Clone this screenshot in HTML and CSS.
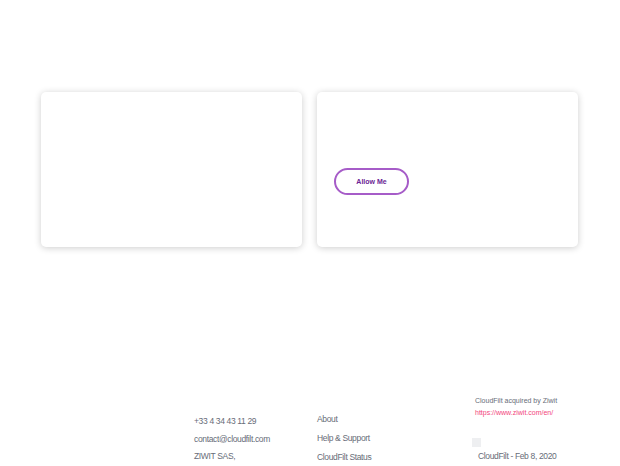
FILE: index.html
```html
<!DOCTYPE html>
<html lang="en">
<head>
<meta charset="utf-8">
<title>CloudFilt</title>
<link rel="stylesheet" href="styles.css">
</head>
<body>
<main class="cards">
  <section class="card"></section>
  <section class="card card-action">
    <button class="allow-btn" type="button">Allow Me</button>
  </section>
</main>
<footer class="footer">
  <div class="col col-contact">
    <p class="line-contact">+33 4 34 43 11 29</p>
    <p class="line-contact">contact@cloudfilt.com</p>
    <p class="line-contact">ZIWIT SAS,</p>
  </div>
  <div class="col col-links">
    <a class="line-link" href="#">About</a>
    <a class="line-link" href="#">Help &amp; Support</a>
    <a class="line-link" href="#">CloudFilt Status</a>
  </div>
  <div class="col col-news">
    <p class="news-title">CloudFilt acquired by Ziwit</p>
    <a class="news-url" href="#">https://www.ziwit.com/en/</a>
    <span class="news-thumb"></span>
    <p class="news-date">CloudFilt - Feb 8, 2020</p>
  </div>
</footer>
</body>
</html>
```
FILE: styles.css
```css
html, body {
  margin: 0;
  padding: 0;
  background: #ffffff;
  font-family: "Liberation Sans", Arial, sans-serif;
}

p { margin: 0; }

.cards {
  display: flex;
  gap: 15px;
  padding: 92px 0 0 41px;
}

.card {
  width: 261px;
  height: 155px;
  box-sizing: border-box;
  background: #ffffff;
  border-radius: 5px;
  box-shadow: 0 1px 7px rgba(0, 0, 0, 0.2);
}

.card-action {
  display: flex;
  align-items: flex-start;
  padding: 76px 0 0 17px;
}

.allow-btn {
  width: 75px;
  height: 27px;
  box-sizing: border-box;
  border: 2px solid #a65cc8;
  border-radius: 14px;
  background: #ffffff;
  color: #6b2394;
  font-family: "Liberation Sans", Arial, sans-serif;
  font-weight: bold;
  font-size: 7px;
  padding: 0;
  cursor: pointer;
}

.footer {
  display: flex;
  margin-top: 148px;
  padding-left: 194px;
  color: #676c78;
}

.col {
  display: flex;
  flex-direction: column;
}

.col-contact {
  width: 123px;
  padding-top: 18px;
}

.line-contact {
  font-size: 8.5px;
  letter-spacing: -0.35px;
  line-height: 17.5px;
}

.col-links {
  width: 155px;
  padding-top: 14.5px;
}

.line-link {
  font-size: 8.5px;
  letter-spacing: -0.35px;
  line-height: 19px;
  color: #676c78;
  text-decoration: none;
}

.news-title {
  font-size: 7px;
  line-height: 12px;
  padding-left: 3px;
}

.news-url {
  font-size: 7px;
  line-height: 12px;
  padding-left: 3px;
  color: #f2457d;
  text-decoration: none;
}

.news-thumb {
  width: 9px;
  height: 9px;
  margin-top: 19px;
  background: #eeeff1;
}

.news-date {
  font-size: 8.5px;
  letter-spacing: -0.35px;
  line-height: 12px;
  margin-top: 3px;
  padding-left: 6px;
}
```
